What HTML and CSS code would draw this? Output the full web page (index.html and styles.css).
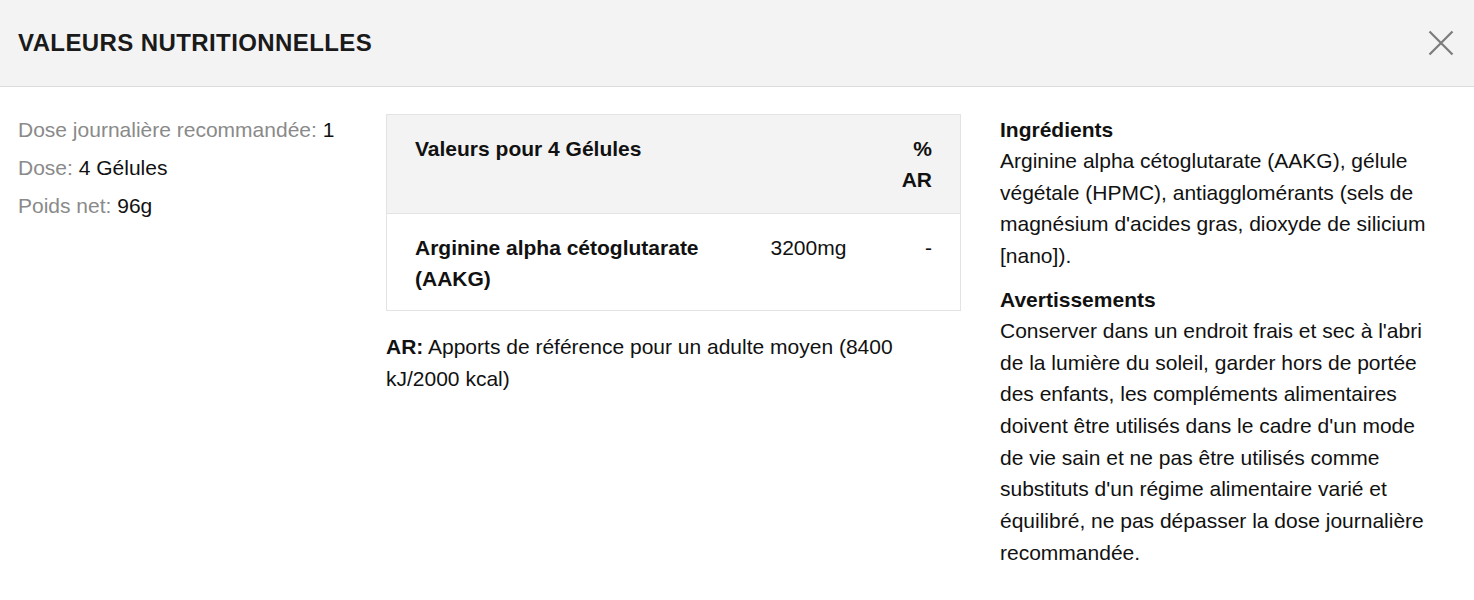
FILE: index.html
```html
<!DOCTYPE html>
<html lang="fr">
<head>
  <meta charset="UTF-8" />
  <title>Valeurs nutritionnelles</title>
  <link rel="stylesheet" href="styles.css">
</head>
<body>
  <header class="modal-header">
    <h1>VALEURS NUTRITIONNELLES</h1>
    <button class="close" aria-label="Fermer">
      <svg width="26" height="26" viewBox="0 0 26 26">
        <path d="M1.5 1.5 L24.5 24.5 M24.5 1.5 L1.5 24.5" stroke="#7b7b7b" stroke-width="2.2" fill="none" />
      </svg>
    </button>
  </header>

  <main class="modal-body">
    <div class="dose-info">
      <p><span class="label">Dose journalière recommandée:</span> 1</p>
      <p><span class="label">Dose:</span> 4 Gélules</p>
      <p><span class="label">Poids net:</span> 96g</p>
    </div>

    <div class="table-col">
      <table class="nutri-table">
        <colgroup>
          <col class="c-name">
          <col class="c-qty">
          <col class="c-ar">
        </colgroup>
        <thead>
          <tr>
            <th colspan="2">Valeurs pour 4 Gélules</th>
            <th class="right">% AR</th>
          </tr>
        </thead>
        <tbody>
          <tr>
            <td class="name">Arginine alpha cétoglutarate (AAKG)</td>
            <td>3200mg</td>
            <td class="right">-</td>
          </tr>
        </tbody>
      </table>
      <p class="note"><b>AR:</b> Apports de référence pour un adulte moyen (8400 kJ/2000 kcal)</p>
    </div>

    <div class="details">
      <h3>Ingrédients</h3>
      <p>Arginine alpha cétoglutarate (AAKG), gélule végétale (HPMC), antiagglomérants (sels de magnésium d'acides gras, dioxyde de silicium [nano]).</p>
      <h3>Avertissements</h3>
      <p class="warnings">Conserver dans un endroit frais et sec à l'abri de la lumière du soleil, garder hors de portée des enfants, les compléments alimentaires doivent être utilisés dans le cadre d'un mode de vie sain et ne pas être utilisés comme substituts d'un régime alimentaire varié et équilibré, ne pas dépasser la dose journalière recommandée.</p>
    </div>
  </main>
</body>
</html>
```

FILE: styles.css
```css
body {
  margin: 0;
  padding: 0;
  font-family: "Liberation Sans", Arial, sans-serif;
  font-size: 21px;
  color: #111;
  background-color: #fff;
}

.modal-header {
  display: flex;
  align-items: center;
  justify-content: space-between;
  height: 86px;
  padding: 0 20px 0 18px;
  background-color: #f3f3f3;
  border-bottom: 1px solid #dcdcdc;
}

.modal-header h1 {
  margin: 0;
  font-size: 24px;
  letter-spacing: 0.4px;
  font-weight: bold;
  color: #1a1a1a;
}

.close {
  background: none;
  border: none;
  padding: 0;
  cursor: pointer;
  display: flex;
}

.modal-body {
  display: grid;
  grid-template-columns: 328px 574px 1fr;
  column-gap: 40px;
  padding: 27px 18px 0 18px;
}

.dose-info {
  margin-top: -3px;
}

.dose-info p {
  margin: 0;
  line-height: 38px;
}

.label {
  color: #8a8a8a;
}

.nutri-table {
  width: 574px;
  border-collapse: collapse;
  table-layout: fixed;
  border: 1px solid #e3e3e3;
}

.c-name {
  width: 356px;
}

.c-qty {
  width: 128px;
}

.c-ar {
  width: 90px;
}

.nutri-table th,
.nutri-table td {
  padding: 18px 28px;
  line-height: 31px;
  text-align: left;
  vertical-align: top;
}

.nutri-table td {
  padding-bottom: 16px;
}

.nutri-table thead tr {
  background-color: #f3f3f3;
  border-bottom: 1px solid #e3e3e3;
}

.nutri-table th {
  font-weight: bold;
}

.nutri-table .name {
  font-weight: bold;
}

.nutri-table .right {
  text-align: right;
}

.note {
  margin: 20px 0 0 0;
  line-height: 32px;
}

.details h3 {
  margin: 0;
  font-size: 21px;
  line-height: 31px;
}

.details p {
  margin: 0 0 12px 0;
  line-height: 31.7px;
}

.details .warnings {
  max-width: 436px;
}
```
